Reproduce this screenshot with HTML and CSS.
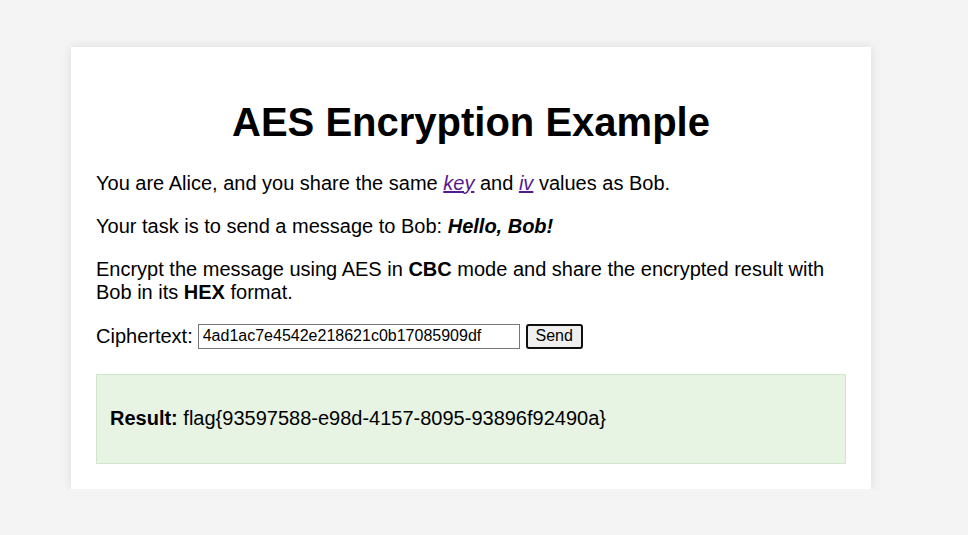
FILE: index.html
```html
<!DOCTYPE html>
<html>
<head>
<meta charset="utf-8">
<title>AES Encryption Example</title>
<link rel="stylesheet" href="styles.css">
</head>
<body>
<div class="container">
  <h1 class="title">AES Encryption Example</h1>
  <p class="text">You are Alice, and you share the same <a href="#" class="link"><em>key</em></a> and <a href="#" class="link"><em>iv</em></a> values as Bob.</p>
  <p class="text">Your task is to send a message to Bob: <strong><em>Hello, Bob!</em></strong></p>
  <p class="text">Encrypt the message using AES in <strong>CBC</strong> mode and share the encrypted result with Bob in its <strong>HEX</strong> format.</p>
  <form class="form text" onsubmit="return false;">
    <label class="label" for="ct">Ciphertext:</label>
    <input class="input" id="ct" type="text" value="4ad1ac7e4542e218621c0b17085909df">
    <button class="button" type="submit">Send</button>
  </form>
  <div class="result">
    <p class="text result-text"><strong>Result:</strong> flag{93597588-e98d-4157-8095-93896f92490a}</p>
  </div>
</div>
</body>
</html>
```

FILE: styles.css
```css
html, body {
  margin: 0;
  padding: 0;
}
body {
  background: #f4f4f4;
  font-family: "Liberation Sans", Arial, sans-serif;
  color: #000;
  padding-top: 47px;
  padding-left: 71px;
}
.container {
  width: 800px;
  box-sizing: border-box;
  background: #fff;
  padding: 25px;
  box-shadow: 0 0 10px rgba(0, 0, 0, 0.1);
}
.title {
  font-size: 40px;
  font-weight: bold;
  text-align: center;
  margin: 26.8px 0;
  line-height: 46px;
}
.text {
  font-size: 20px;
  line-height: 23px;
  margin: 20px 0;
}
.link {
  color: #551a8b;
}
.form {
  display: flex;
  align-items: center;
  height: 25px;
}
.label {
  margin-right: 5px;
}
.input {
  box-sizing: border-box;
  width: 322px;
  height: 25px;
  border: 1px solid #767676;
  padding: 1px 4px;
  font-family: "Liberation Sans", Arial, sans-serif;
  font-size: 16px;
  color: #000;
  margin: 0;
}
.button {
  box-sizing: border-box;
  margin: 0 0 0 6px;
  width: 57px;
  height: 25px;
  border: 2px solid #101010;
  border-radius: 3px;
  background: #efefef;
  font-family: "Liberation Sans", Arial, sans-serif;
  font-size: 16px;
  padding: 0;
  color: #000;
}
.result {
  margin-top: 25px;
  background: #e7f3e3;
  border: 1px solid #d2e6cd;
  padding: 12px 13px 13px;
}
.result-text {
  margin: 20px 0;
}
```
